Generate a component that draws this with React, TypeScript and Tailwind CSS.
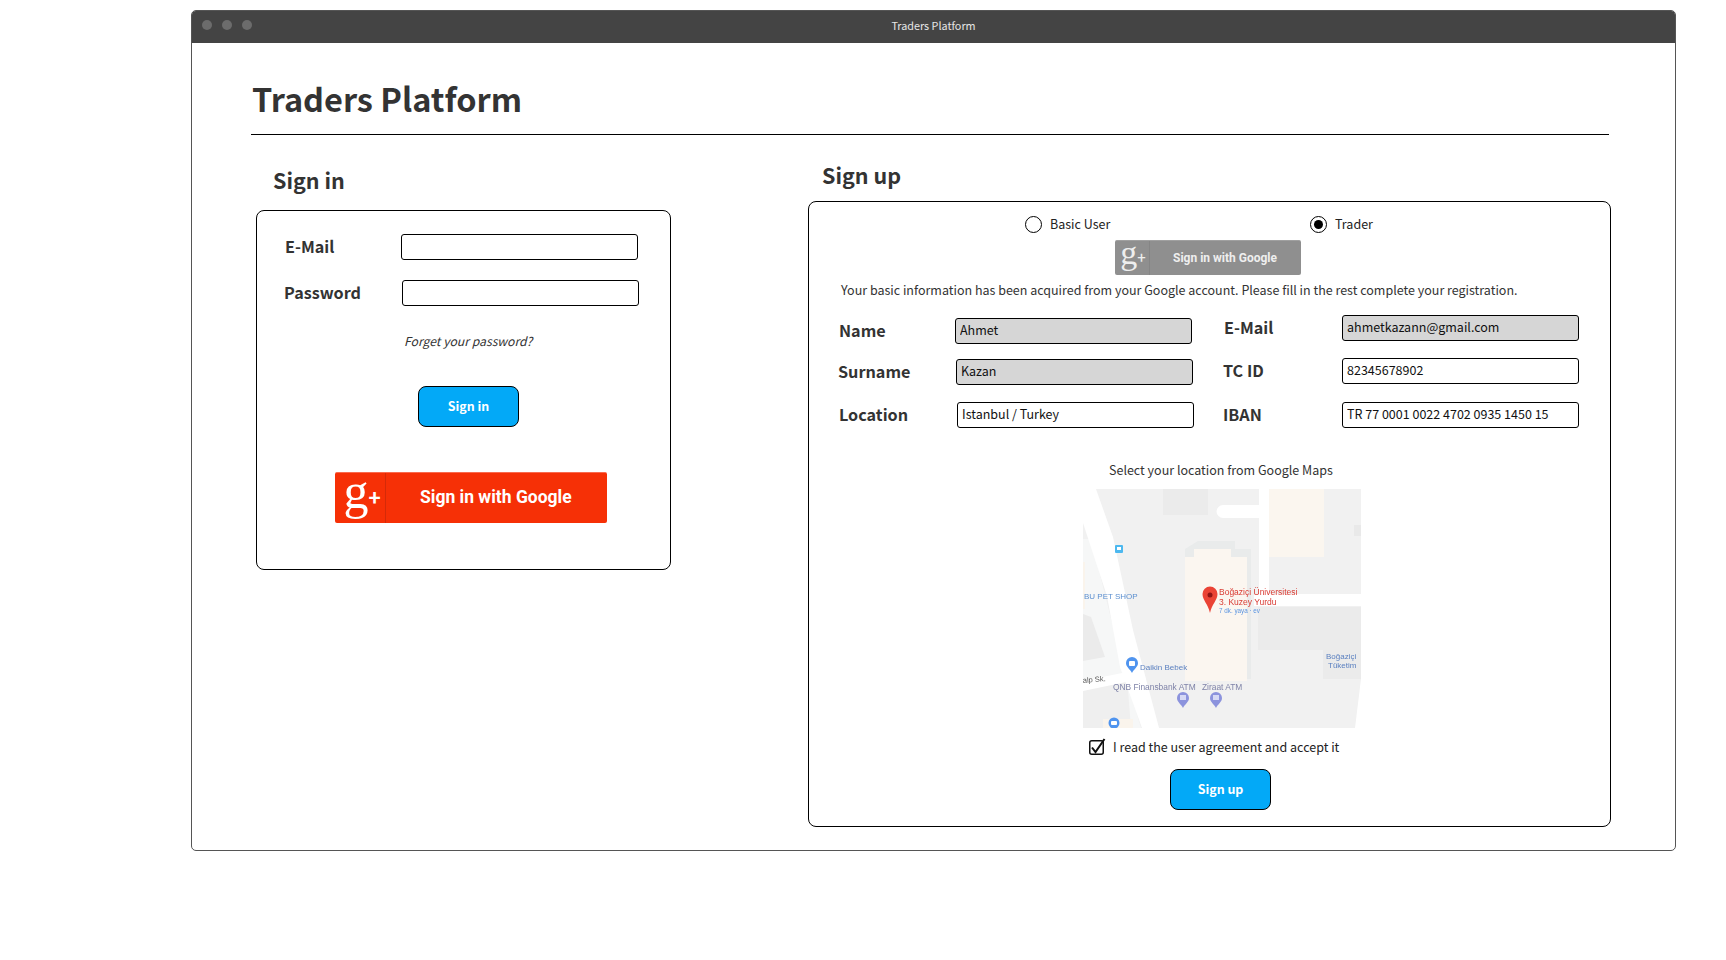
const Field = ({ value = "", filled = false, className = "" }: { value?: string; filled?: boolean; className?: string }) => (
  <input
    readOnly
    value={value}
    className={`h-[26px] rounded-[3px] border border-black px-[4px] pb-[3px] text-[12.5px] text-[#111] outline-none ${filled ? "bg-[#d6d6d6]" : "bg-white"} ${className}`}
  />
);

const Label = ({ text, className = "" }: { text: string; className?: string }) => (
  <span className={`h-[26px] text-[16.2px] leading-[24px] font-bold text-[#333] ${className}`}>{text}</span>
);

const GoogleButton = ({ small = false }: { small?: boolean }) => {
  if (small) {
    return (
      <div className="ml-[306px] mt-[7px] flex h-[35px] w-[186px] rounded-[2px] border-t border-[#a0a0a0] bg-[#8f8f8f] text-[#eeeeee]">
        <div className="flex w-[35px] items-center justify-center border-r border-[#858585] pl-[2px]">
          <span className="pb-[10px] font-['Liberation_Serif',serif] text-[34px] leading-[28px]">g</span>
          <span className="font-['Roboto',sans-serif] text-[15px] leading-[28px]">+</span>
        </div>
        <span className="ml-[23px] font-['Roboto',sans-serif] text-[12px] leading-[34px] font-bold">Sign in with Google</span>
      </div>
    );
  }
  return (
    <div className="ml-[78px] mt-[45px] flex h-[51px] w-[272px] rounded-[2px] border-t border-[#fa6a4e] bg-[#f63006] text-white">
      <div className="flex w-[51px] items-center justify-center border-r border-[#d52a08] pl-[4px]">
        <span className="pb-[15px] font-['Liberation_Serif',serif] text-[50px] leading-[40px]">g</span>
        <span className="font-['Roboto',sans-serif] text-[22px] leading-[40px] font-medium">+</span>
      </div>
      <span className="ml-[34px] font-['Roboto',sans-serif] text-[17.500px] leading-[49px] font-bold">Sign in with Google</span>
    </div>
  );
};

const MapView = () => (
  <svg viewBox="0 0 278 239" className="ml-[274px] mt-[9px] block h-[239px] w-[278px] blur-[0.35px]">
    <rect width="278" height="239" fill="#f1f1f1" />
    {/* left side buildings and paths */}
    <polygon points="0,50 8,50 40,178 58,239 0,239" fill="#f6f7f7" />
    <polygon points="0,125 8,128 22,168 0,172" fill="#ebebeb" />
    <polygon points="0,73 2,73 2,120 0,120" fill="#faf4ec" />
    <polygon points="0,195 44,188 48,239 0,239" fill="#efefef" />
    <rect x="20" y="230" width="30" height="9" fill="#faf4ec" />
    <polygon points="0,0 13,0 30,48 50,141 76,239 59,239 37,178 24,107 0,34" fill="#ffffff" />
    <polygon points="0,192 44,183 48,192 0,202" fill="#ffffff" />
    {/* top blocks */}
    <rect x="80" y="0" width="45" height="26" fill="#ebebeb" />
    <rect x="186" y="0" width="55" height="68" fill="#fbf6ef" />
    <rect x="271" y="36" width="7" height="11" fill="#e9e9e9" />
    {/* roads */}
    <rect x="176" y="0" width="10" height="106" fill="#ffffff" />
    <path d="M176 16H140a6.500 6.500 0 0 0 0 13H176Z" fill="#ffffff" />
    <polygon points="171,106 186,100 186,105 278,105 278,117 171,117" fill="#ffffff" />
    <polygon points="278,190 278,239 272,239" fill="#ffffff" />
    {/* center building */}
    <polygon points="102,60 115,52 152,52 152,60 168,60 168,190 102,190" fill="#e9ebeb" />
    <rect x="102" y="68" width="62" height="124" fill="#fbf6f0" />
    <rect x="111" y="60" width="37" height="9" fill="#fbf6f0" />
    {/* right blocks */}
    <rect x="175" y="118" width="103" height="43" fill="#ebebeb" />
    <rect x="240" y="161" width="38" height="29" fill="#ebebeb" />
    {/* bus stop */}
    <rect x="32" y="56" width="8" height="8" rx="1" fill="#4db8ef" />
    <rect x="34" y="58" width="4" height="3" fill="#ffffff" />
    {/* marker */}
    <path d="M127 124C125 115 119.500 111 119.500 105A7.500 7.500 0 0 1 134.500 105C134.500 111 129 115 127 124Z" fill="#ea4335" />
    <circle cx="127" cy="106" r="2.500" fill="#8f1414" />
    <g fontFamily="Liberation Sans, sans-serif">
      <text x="136" y="106" fontSize="8.500" fill="#d93a32">Boğaziçi Üniversitesi</text>
      <text x="136" y="116" fontSize="8.500" fill="#d93a32">3. Kuzey Yurdu</text>
      <text x="136" y="124" fontSize="6.300" fill="#5a94e0">7 dk. yaya · ev</text>
      <text x="1" y="110" fontSize="8" fill="#5b8fd0">BU PET SHOP</text>
      <text x="57" y="181" fontSize="8" fill="#5b80c0">Daikin Bebek</text>
      <text x="0" y="194" fontSize="7.500" fill="#555" transform="rotate(-5 0 194)">alp Sk.</text>
      <text x="30" y="201" fontSize="8.400" fill="#7f83a8">QNB Finansbank ATM</text>
      <text x="119" y="201" fontSize="8.400" fill="#7f83a8">Ziraat ATM</text>
      <text x="243" y="170" fontSize="8" fill="#5b80c0">Boğaziçi</text>
      <text x="245" y="179" fontSize="8" fill="#5b80c0">Tüketim</text>
    </g>
    {/* poi pins */}
    <path d="M49 184C47 180 43 178 43 174A6 6 0 0 1 55 174C55 178 51 180 49 184Z" fill="#4f94ef" />
    <rect x="46" y="172" width="6" height="5" rx="1" fill="#ffffff" />
    <path d="M100 219C98 215 94 213 94 209A6 6 0 0 1 106 209C106 213 102 215 100 219Z" fill="#8c93dd" />
    <path d="M133 219C131 215 127 213 127 209A6 6 0 0 1 139 209C139 213 135 215 133 219Z" fill="#8c93dd" />
    <rect x="97" y="206" width="6" height="5" fill="#d6d9f5" />
    <rect x="130" y="206" width="6" height="5" fill="#d6d9f5" />
    <circle cx="31" cy="234" r="5.500" fill="#4f94ef" />
    <rect x="28" y="232" width="6" height="4" rx="1" fill="#ffffff" />
  </svg>
);

export default function App() {
  return (
    <div className="h-[960px] w-full bg-white pl-[191px] pt-[10px] font-['Noto_Sans_CJK_SC','Noto_Sans',sans-serif]">
      <div className="h-[841px] w-[1485px] overflow-hidden rounded-[5px] border border-[#555]">
        {/* title bar */}
        <div className="relative flex h-[32px] items-center justify-center bg-[#444444] pb-[3px]">
          <div className="absolute left-[10px] top-[9px] flex gap-[10px]">
            <span className="h-[10px] w-[10px] rounded-full bg-[#6c6c6c]" />
            <span className="h-[10px] w-[10px] rounded-full bg-[#6c6c6c]" />
            <span className="h-[10px] w-[10px] rounded-full bg-[#6c6c6c]" />
          </div>
          <span className="text-[10.800px] text-[#e6e6e6]">Traders Platform</span>
        </div>

        {/* page heading */}
        <div className="ml-[59px] flex h-[92px] w-[1358px] items-end border-b border-black pb-[12px] pl-[1px]">
          <h1 className="text-[32.500px] leading-[48px] font-bold text-[#333]">Traders Platform</h1>
        </div>

        <div className="ml-[64px] flex gap-[137px]">
          {/* sign in */}
          <div className="w-[415px]">
            <h2 className="ml-[17px] mt-[29px] h-[33px] text-[21.500px] leading-[32px] font-bold text-[#333]">Sign in</h2>
            <div className="mt-[13px] h-[360px] rounded-[8px] border border-black">
              <div className="mt-[23px] flex items-center pl-[28px]">
                <Label text="E-Mail" className="w-[116px]" />
                <Field className="w-[237px]" />
              </div>
              <div className="mt-[20px] flex items-center pl-[27px]">
                <Label text="Password" className="w-[118px]" />
                <Field className="w-[237px]" />
              </div>
              <p className="ml-[147px] mt-[25px] text-[12.200px] leading-[20px] text-[#333] italic">Forget your password?</p>
              <button className="ml-[161px] mt-[35px] block h-[41px] w-[101px] rounded-[8px] border border-black bg-[#03a9f7] text-[12.400px] font-bold text-white">
                Sign in
              </button>
              <GoogleButton />
            </div>
          </div>

          {/* sign up */}
          <div className="w-[803px]">
            <h2 className="ml-[14px] mt-[24px] h-[33px] text-[21.500px] leading-[32px] font-bold text-[#333]">Sign up</h2>
            <div className="mt-[9px] h-[626px] rounded-[8px] border border-black">
              <div className="ml-[216px] mt-[14px] flex h-[17px] text-[12.500px] text-[#222]">
                <div className="flex w-[285px] items-center gap-[8px]">
                  <span className="h-[17px] w-[17px] rounded-full border border-black" />
                  <span>Basic User</span>
                </div>
                <div className="-mt-[1px] flex items-center gap-[8px]">
                  <span className="flex h-[17px] w-[17px] items-center justify-center rounded-full border border-black">
                    <span className="h-[9px] w-[9px] rounded-full bg-black" />
                  </span>
                  <span>Trader</span>
                </div>
              </div>
              <GoogleButton small />
              <p className="ml-[32px] mt-[5px] h-[21px] text-[12.500px] leading-[20px] text-[#333]">
                Your basic information has been acquired from your Google account. Please fill in the rest complete your registration.
              </p>

              <div className="ml-[29px] mt-[17px] flex items-start gap-[28px]">
                <div>
                  <div className="ml-[1px] flex">
                    <Label text="Name" className="w-[116px]" />
                    <Field value="Ahmet" filled className="w-[237px]" />
                  </div>
                  <div className="mt-[15px] flex">
                    <Label text="Surname" className="w-[118px]" />
                    <Field value="Kazan" filled className="w-[237px]" />
                  </div>
                  <div className="ml-[1px] mt-[17px] flex">
                    <Label text="Location" className="w-[118px]" />
                    <Field value="Istanbul / Turkey" className="w-[237px]" />
                  </div>
                </div>
                <div className="-mt-[3px]">
                  <div className="ml-[2px] flex">
                    <Label text="E-Mail" className="w-[118px]" />
                    <Field value="ahmetkazann@gmail.com" filled className="w-[237px]" />
                  </div>
                  <div className="ml-[1px] mt-[17px] flex">
                    <Label text="TC ID" className="w-[119px]" />
                    <Field value="82345678902" className="w-[237px]" />
                  </div>
                  <div className="ml-[1px] mt-[18px] flex">
                    <Label text="IBAN" className="w-[119px]" />
                    <Field value="TR 77 0001 0022 4702 0935 1450 15" className="w-[237px]" />
                  </div>
                </div>
              </div>

              <p className="ml-[300px] mt-[32px] text-[12.500px] leading-[20px] text-[#333]">Select your location from Google Maps</p>
              <MapView />

              <div className="ml-[280px] mt-[9px] flex h-[20px] items-center gap-[9px] text-[12.500px] text-[#222]">
                <svg viewBox="0 0 15 15" className="h-[15px] w-[15px] overflow-visible">
                  <rect x="0.750" y="0.750" width="13.500" height="13.500" rx="2" fill="none" stroke="#111" strokeWidth="1.500" />
                  <path d="M3 7.500 L6.500 12 L15.500 -1" fill="none" stroke="#111" strokeWidth="2" />
                </svg>
                <span>I read the user agreement and accept it</span>
              </div>
              <button className="ml-[361px] mt-[12px] block h-[41px] w-[101px] rounded-[8px] border border-black bg-[#03a9f7] text-[12.400px] font-bold text-white">
                Sign up
              </button>
            </div>
          </div>
        </div>
      </div>
    </div>
  );
}
